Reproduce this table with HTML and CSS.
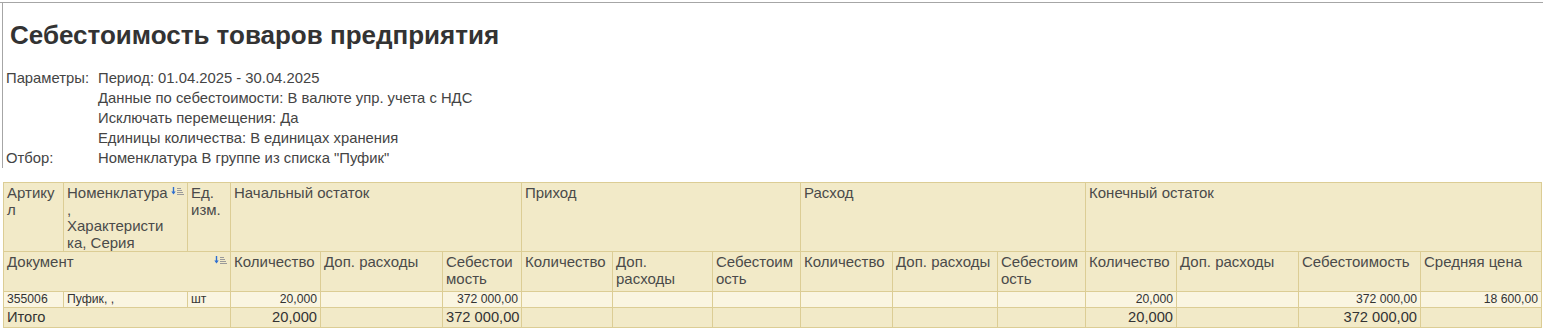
FILE: index.html
```html
<!DOCTYPE html>
<html lang="ru">
<head>
<meta charset="utf-8">
<title>Себестоимость товаров предприятия</title>
<link rel="stylesheet" href="styles.css">
</head>
<body>
<div class="sheet">
  <div class="frame">
    <h1 class="title">Себестоимость товаров предприятия</h1>
    <div class="params">
      <div class="plabel">Параметры:</div>
      <div class="pvalues">
        <div>Период: 01.04.2025 - 30.04.2025</div>
        <div>Данные по себестоимости: В валюте упр. учета с НДС</div>
        <div>Исключать перемещения: Да</div>
        <div>Единицы количества: В единицах хранения</div>
      </div>
      <div class="plabel">Отбор:</div>
      <div class="pvalues">
        <div>Номенклатура В группе из списка "Пуфик"</div>
      </div>
    </div>
  </div>
  <table class="report">
    <colgroup>
      <col style="width:60px"><col style="width:124px"><col style="width:43px">
      <col style="width:90px"><col style="width:122px"><col style="width:79px">
      <col style="width:91px"><col style="width:100px"><col style="width:88px">
      <col style="width:92px"><col style="width:105px"><col style="width:88px">
      <col style="width:91px"><col style="width:122px"><col style="width:122px"><col style="width:121px">
    </colgroup>
    <thead>
      <tr class="h1row">
        <th>Артику<br>л</th>
        <th class="sortable"><span class="sort"><svg width="14" height="9" viewBox="0 0 14 9"><path d="M2.5 0v5.5" stroke="#2f6fd1" stroke-width="1.4"/><path d="M0.3 4.5h4.4L2.5 7.6z" fill="#2f6fd1"/><path d="M6 1.5h4M6 3.5h5M6 5.5h6M6 7.5h7" stroke="#9a9a9a" stroke-width="1"/></svg></span>Номенклатура<br>,<br>Характеристи<br>ка, Серия</th>
        <th>Ед.<br>изм.</th>
        <th colspan="3">Начальный остаток</th>
        <th colspan="3">Приход</th>
        <th colspan="3">Расход</th>
        <th colspan="4">Конечный остаток</th>
      </tr>
      <tr class="h2row">
        <th colspan="3" class="sortable"><span class="sort"><svg width="14" height="9" viewBox="0 0 14 9"><path d="M2.5 0v5.5" stroke="#2f6fd1" stroke-width="1.4"/><path d="M0.3 4.5h4.4L2.5 7.6z" fill="#2f6fd1"/><path d="M6 1.5h4M6 3.5h5M6 5.5h6M6 7.5h7" stroke="#9a9a9a" stroke-width="1"/></svg></span>Документ</th>
        <th>Количество</th>
        <th>Доп. расходы</th>
        <th>Себестои<br>мость</th>
        <th>Количество</th>
        <th>Доп.<br>расходы</th>
        <th>Себестоим<br>ость</th>
        <th>Количество</th>
        <th>Доп. расходы</th>
        <th>Себестоим<br>ость</th>
        <th>Количество</th>
        <th>Доп. расходы</th>
        <th>Себестоимость</th>
        <th>Средняя цена</th>
      </tr>
    </thead>
    <tbody>
      <tr class="drow">
        <td>355006</td>
        <td>Пуфик, ,</td>
        <td>шт</td>
        <td class="num">20,000</td>
        <td></td>
        <td class="num">372 000,00</td>
        <td></td><td></td><td></td>
        <td></td><td></td><td></td>
        <td class="num">20,000</td>
        <td></td>
        <td class="num">372 000,00</td>
        <td class="num">18 600,00</td>
      </tr>
      <tr class="trow">
        <td colspan="3">Итого</td>
        <td class="num">20,000</td>
        <td></td>
        <td class="num">372 000,00</td>
        <td></td><td></td><td></td>
        <td></td><td></td><td></td>
        <td class="num">20,000</td>
        <td></td>
        <td class="num">372 000,00</td>
        <td></td>
      </tr>
    </tbody>
  </table>
</div>
</body>
</html>
```

FILE: styles.css
```css
html, body {
  margin: 0;
  padding: 0;
  background: #ffffff;
}

body {
  font-family: "Liberation Sans", Arial, sans-serif;
  color: #4a4a4a;
}

.sheet {
  padding-top: 2px;
  border-top: 1px solid #a6a6a6;
  margin-top: 2px;
}

.frame {
  margin-left: 2px;
  border-left: 1px solid #a6a6a6;
  margin-top: -3px;
  padding-top: 3px;
  padding-bottom: 0;
}

.title {
  margin: 0;
  padding: 14px 0 0 7px;
  font-size: 26px;
  line-height: 32px;
  font-weight: bold;
  color: #333333;
}

.params {
  display: grid;
  grid-template-columns: 92px auto;
  margin-top: 17px;
  margin-left: 3px;
  font-size: 14.8px;
  line-height: 20px;
  color: #444444;
}

.report {
  margin-left: 3px;
  margin-top: 14px;
  border-collapse: collapse;
  table-layout: fixed;
  width: 1538px;
  font-size: 15px;
  color: #4a4a4a;
}

.report th,
.report td {
  border: 1px solid #dccd95;
  padding: 0 3px;
  text-align: left;
  vertical-align: top;
  font-weight: normal;
  overflow: hidden;
  white-space: nowrap;
}

.report thead th {
  background: #f2eac8;
  line-height: 16.5px;
}

.h1row th {
  height: 68px;
  padding-top: 2px;
  box-sizing: border-box;
}

.h2row th {
  height: 40px;
  padding-top: 2px;
  box-sizing: border-box;
}

.sortable {
  position: relative;
}

.sort {
  position: absolute;
  top: 4px;
  right: 2px;
  line-height: 0;
}

.drow td {
  background: #faf5e1;
  font-size: 12.2px;
  line-height: 14px;
  height: 16px;
  box-sizing: border-box;
  border-top: 1px solid #a8a8a8;
  color: #333;
}

.trow td {
  background: #f2eac8;
  font-size: 14.7px;
  line-height: 18px;
  height: 20px;
  box-sizing: border-box;
  color: #333;
}

.report td.num {
  text-align: right;
}
```
